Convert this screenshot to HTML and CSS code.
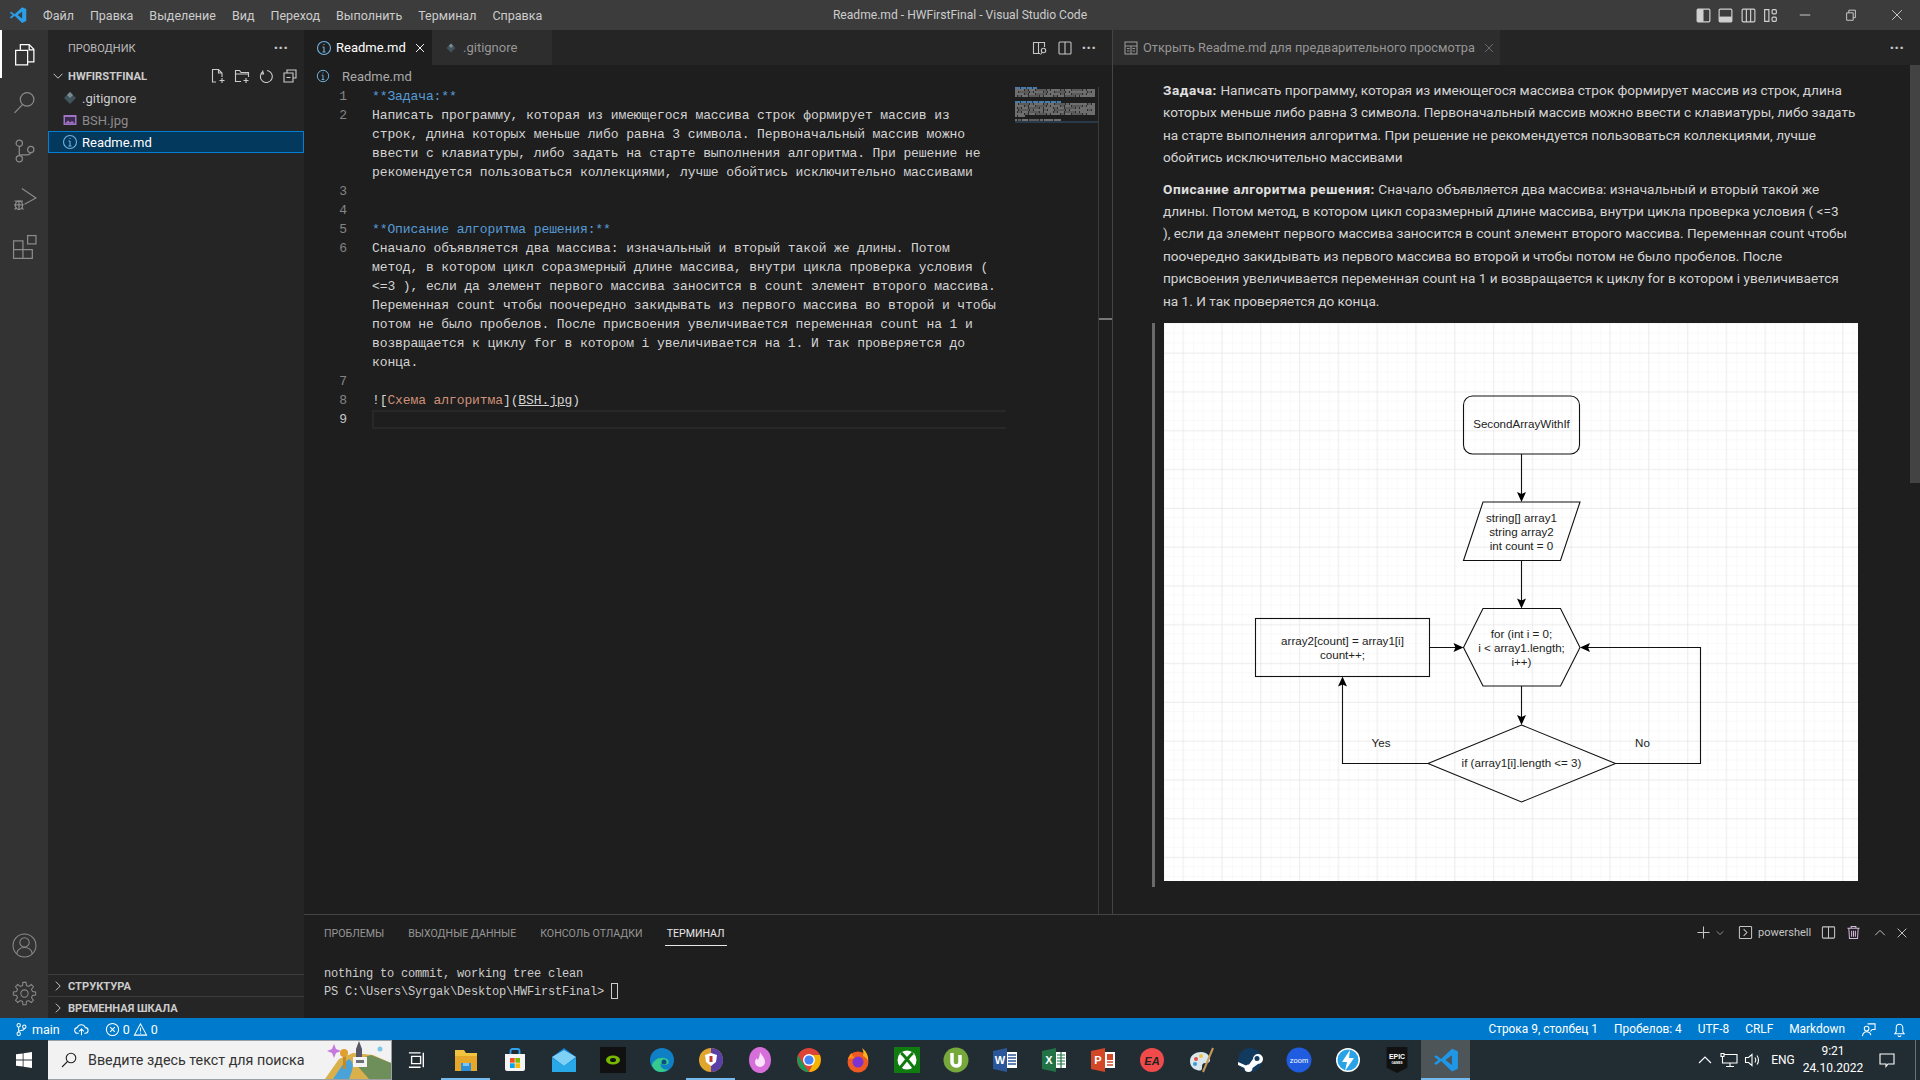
FILE: index.html
```html
<!DOCTYPE html>
<html lang="ru">
<head>
<meta charset="utf-8">
<title>Readme.md - HWFirstFinal - Visual Studio Code</title>
<link rel="stylesheet" href="styles.css">
</head>
<body>
<header class="titlebar">
  <svg class="vsc-logo" viewBox="0 0 24 24"><path fill="#2a9fe8" d="M17.5 1.5 23 4v16l-5.500 2.500L7.500 13l-4.500 3.500L1 15l4-3-4-3 2-1.500L7.500 11zM17.500 7.500 11.500 12l6 4.500z"/></svg>
  <nav class="menu"><span>Файл</span><span>Правка</span><span>Выделение</span><span>Вид</span><span>Переход</span><span>Выполнить</span><span>Терминал</span><span>Справка</span></nav>
  <div class="wintitle">Readme.md - HWFirstFinal - Visual Studio Code</div>
  <div class="layout-btns">
    <svg class="ic" viewBox="0 0 16 16"><rect x="2" y="2" width="12" height="12" rx="1"/><path class="solid" d="M2 2h6v12H2z"/></svg>
    <svg class="ic" viewBox="0 0 16 16"><rect x="2" y="2" width="12" height="12" rx="1"/><path class="solid" d="M2 9h12v5H2z"/></svg>
    <svg class="ic" viewBox="0 0 16 16"><rect x="2" y="2" width="12" height="12" rx="1"/><path d="M10 2v12M6 2v12"/></svg>
    <svg class="ic" viewBox="0 0 16 16"><path d="M2.500 2.500h4v11h-4z"/><rect x="9.500" y="2.500" width="4" height="4" rx="1"/><rect x="9.500" y="9.500" width="4" height="4" rx="1"/></svg>
  </div>
  <div class="win-btns">
    <span class="win-btn"><svg class="ic" viewBox="0 0 16 16"><path d="M2 8h12"/></svg></span>
    <span class="win-btn"><svg class="ic" viewBox="0 0 16 16"><path d="M3 5.500h7.500V14H3zM5.500 5.500V2.500H13V11h-2.500"/></svg></span>
    <span class="win-btn"><svg class="ic" viewBox="0 0 16 16"><path d="M2.500 2.500l11 11M13.500 2.500l-11 11"/></svg></span>
  </div>
</header>

<div class="main">
  <aside class="activity">
    <div class="act active"><svg class="ic" viewBox="0 0 24 24"><path d="M8 8V2.500h8.500L21 7v12h-6M16.500 2.500V7.500H21"/><path d="M3.500 8H15v14H3.500z"/></svg></div>
    <div class="act"><svg class="ic" viewBox="0 0 24 24"><circle cx="14.500" cy="9" r="6.500"/><path d="M10 14l-7.500 8"/></svg></div>
    <div class="act"><svg class="ic" viewBox="0 0 24 24"><circle cx="7" cy="5" r="3"/><circle cx="7" cy="20" r="3"/><circle cx="18" cy="11" r="3"/><path d="M7 8v9M18 14c0 4-11 1-11 3"/></svg></div>
    <div class="act"><svg class="ic" viewBox="0 0 24 24"><path d="M9.500 2.500 23 11.500l-11 6"/><path d="M2.500 14.500h8M2.500 22.500l2-2M11 22.500l-2-2M2 18h9M6.700 14.500V23"/><ellipse cx="6.700" cy="18.500" rx="3.500" ry="4"/></svg></div>
    <div class="act"><svg class="ic" viewBox="0 0 24 24"><rect x="15" y="1.500" width="8" height="8"/><path d="M1.500 6.500h9v17h-9zM1.500 15h18v8.500h-9"/></svg></div>
    <div class="act-fill"></div>
    <div class="act"><svg class="ic big" viewBox="0 0 24 24"><circle cx="12" cy="12" r="11"/><circle cx="12" cy="9" r="4.500"/><path d="M4.500 20c1-5 4-6 7.500-6s6.500 1 7.500 6"/></svg></div>
    <div class="act gear"><svg class="ic big" viewBox="-12 -12 24 24"><defs><path id="tooth" d="M-3-7.200-1.900-7.600-1.500-10.700H1.500L1.900-7.600 3-7.200"/></defs><use href="#tooth"/><use href="#tooth" transform="rotate(45)"/><use href="#tooth" transform="rotate(90)"/><use href="#tooth" transform="rotate(135)"/><use href="#tooth" transform="rotate(180)"/><use href="#tooth" transform="rotate(225)"/><use href="#tooth" transform="rotate(270)"/><use href="#tooth" transform="rotate(315)"/><circle r="3.500"/></svg></div>
  </aside>

  <aside class="sidebar">
    <div class="side-head"><span>ПРОВОДНИК</span><span class="dots">···</span></div>
    <div class="tree-head">
      <svg class="ic chev" viewBox="0 0 16 16"><path d="M3 5.500l5 5 5-5"/></svg>
      <b>HWFIRSTFINAL</b>
      <span class="tree-actions">
        <svg class="ic" viewBox="0 0 16 16"><path d="M6 14H2.500V1.500h6L12 5v4M8.500 1.500V5H12M12 10v5M9.500 12.500h5"/></svg>
        <svg class="ic" viewBox="0 0 16 16"><path d="M7 13.500H1.500v-11h4l1.500 2h7.500V9M1.500 6h13M12 10v5M9.500 12.500h5"/></svg>
        <svg class="ic" viewBox="0 0 16 16"><path d="M4.500 2.500l1 3.500h-3M5 3.500a6 6 0 1 0 4-1"/></svg>
        <svg class="ic" viewBox="0 0 16 16"><path d="M5 4.500V2h9v8h-3M2 5h9v9H2zM4.500 9.500h4"/></svg>
      </span>
    </div>
    <div class="file"><svg class="fi" viewBox="0 0 16 16"><path fill="#41535b" d="M8 2l6 6-6 6-6-6z"/><path fill="#7a8b93" d="M8 2 5 5l3 3 3-3z"/></svg><span>.gitignore</span></div>
    <div class="file dim"><svg class="fi" viewBox="0 0 16 16"><rect x="1.500" y="3" width="13" height="10" fill="#a074c4"/><rect x="3" y="5" width="10" height="6.500" fill="#3d2c52"/><path fill="#a074c4" d="M3 11.500l3-3 2 2 2-1.500 3 2.500z"/></svg><span>BSH.jpg</span></div>
    <div class="file selected"><svg class="ic fi info" viewBox="0 0 16 16"><circle cx="8" cy="8" r="6.500"/><path d="M8 7v5M6.500 12h3M6.500 7H8M8 4v1"/></svg><span>Readme.md</span></div>
    <div class="side-fill"></div>
    <div class="pane-head"><svg class="ic chev" viewBox="0 0 16 16"><path d="M5.500 3l5 5-5 5"/></svg><b>СТРУКТУРА</b></div>
    <div class="pane-head"><svg class="ic chev" viewBox="0 0 16 16"><path d="M5.500 3l5 5-5 5"/></svg><b>ВРЕМЕННАЯ ШКАЛА</b></div>
  </aside>

  <div class="workspace">
    <div class="editors">
      <section class="group">
        <div class="tabs">
          <div class="tab active"><svg class="ic fi info" viewBox="0 0 16 16"><circle cx="8" cy="8" r="6.500"/><path d="M8 7v5M6.500 12h3M6.500 7H8M8 4v1"/></svg><span class="tab-name">Readme.md</span><svg class="ic tab-x" viewBox="0 0 16 16"><path d="M3.500 3.500l9 9M12.500 3.500l-9 9"/></svg></div>
          <div class="tab off"><svg class="fi small" viewBox="0 0 16 16"><path fill="#41535b" d="M8 2l6 6-6 6-6-6z"/><path fill="#7a8b93" d="M8 2 5 5l3 3 3-3z"/></svg><span class="tab-name">.gitignore</span></div>
          <div class="tab-actions">
            <svg class="ic" viewBox="0 0 16 16"><path d="M8 13.500H1.500v-11h11V7M6.500 2.500v11"/><circle cx="11.500" cy="10.500" r="2.200"/><path d="M10 12.500l-1.500 2"/></svg>
            <svg class="ic" viewBox="0 0 16 16"><rect x="2" y="2" width="12" height="12" rx="1"/><path d="M8 2v12"/></svg>
            <span class="dots">···</span>
          </div>
        </div>
        <div class="crumbs"><svg class="ic fi info" viewBox="0 0 16 16"><circle cx="8" cy="8" r="6.500"/><path d="M8 7v5M6.500 12h3M6.500 7H8M8 4v1"/></svg><span>Readme.md</span></div>
        <div class="code-area">
          <div class="code">
            <div class="row"><span class="ln">1</span><span class="tx head">**Задача:**</span></div>
            <div class="row"><span class="ln">2</span><span class="tx">Написать программу, которая из имеющегося массива строк формирует массив из</span></div>
            <div class="row"><span class="ln"></span><span class="tx">строк, длина которых меньше либо равна 3 символа. Первоначальный массив можно</span></div>
            <div class="row"><span class="ln"></span><span class="tx">ввести с клавиатуры, либо задать на старте выполнения алгоритма. При решение не</span></div>
            <div class="row"><span class="ln"></span><span class="tx">рекомендуется пользоваться коллекциями, лучше обойтись исключительно массивами</span></div>
            <div class="row"><span class="ln">3</span><span class="tx"></span></div>
            <div class="row"><span class="ln">4</span><span class="tx"></span></div>
            <div class="row"><span class="ln">5</span><span class="tx head">**Описание алгоритма решения:**</span></div>
            <div class="row"><span class="ln">6</span><span class="tx">Сначало объявляется два массива: изначальный и вторый такой же длины. Потом</span></div>
            <div class="row"><span class="ln"></span><span class="tx">метод, в котором цикл соразмерный длине массива, внутри цикла проверка условия (</span></div>
            <div class="row"><span class="ln"></span><span class="tx">&lt;=3 ), если да элемент первого массива заносится в count элемент второго массива.</span></div>
            <div class="row"><span class="ln"></span><span class="tx">Переменная count чтобы поочередно закидывать из первого массива во второй и чтобы</span></div>
            <div class="row"><span class="ln"></span><span class="tx">потом не было пробелов. После присвоения увеличивается переменная count на 1 и</span></div>
            <div class="row"><span class="ln"></span><span class="tx">возвращается к циклу for в котором i увеличивается на 1. И так проверяется до</span></div>
            <div class="row"><span class="ln"></span><span class="tx">конца.</span></div>
            <div class="row"><span class="ln">7</span><span class="tx"></span></div>
            <div class="row"><span class="ln">8</span><span class="tx">![<span class="lk">Схема алгоритма</span>](<u>BSH.jpg</u>)</span></div>
            <div class="row current"><span class="ln">9</span><span class="tx"></span></div>
          </div>
          <div class="minimap">
            <div class="mini-line short blue"></div>
            <div class="mini-line"></div><div class="mini-line"></div><div class="mini-line"></div><div class="mini-line"></div>
            <div class="mini-line blank"></div><div class="mini-line blank"></div>
            <div class="mini-line mid blue"></div>
            <div class="mini-line"></div><div class="mini-line"></div><div class="mini-line"></div><div class="mini-line"></div><div class="mini-line"></div><div class="mini-line"></div>
            <div class="mini-line tiny"></div>
            <div class="mini-line blank"></div>
            <div class="mini-line mid"></div>
            <div class="mini-cur"></div>
          </div>
          <div class="ruler"><div class="ruler-mark"></div></div>
        </div>
      </section>

      <section class="preview">
        <div class="tabs">
          <div class="tab off wide"><svg class="ic fi" viewBox="0 0 16 16"><rect x="2" y="2" width="12" height="12"/><path d="M2 6h12M8 6v8M4 8.500h2.500M4 11h2.500M9.500 8.500H12M9.500 11H12"/></svg><span class="tab-name">Открыть Readme.md для предварительного просмотра</span><svg class="ic tab-x" viewBox="0 0 16 16"><path d="M3.500 3.500l9 9M12.500 3.500l-9 9"/></svg></div>
          <div class="tab-actions"><span class="dots">···</span></div>
        </div>
        <div class="preview-body">
          <article class="doc">
            <p><b>Задача:</b> Написать программу, которая из имеющегося массива строк формирует массив из строк, длина<br>которых меньше либо равна 3 символа. Первоначальный массив можно ввести с клавиатуры, либо задать<br>на старте выполнения алгоритма. При решение не рекомендуется пользоваться коллекциями, лучше<br>обойтись исключительно массивами</p>
            <p><b>Описание алгоритма решения:</b> Сначало объявляется два массива: изначальный и вторый такой же<br>длины. Потом метод, в котором цикл соразмерный длине массива, внутри цикла проверка условия ( &lt;=3<br>), если да элемент первого массива заносится в count элемент второго массива. Переменная count чтобы<br>поочередно закидывать из первого массива во второй и чтобы потом не было пробелов. После<br>присвоения увеличивается переменная count на 1 и возвращается к циклу for в котором i увеличивается<br>на 1. И так проверяется до конца.</p>
            <blockquote>
              <svg class="diagram" viewBox="0 0 694 558">
                <defs>
                  <pattern id="minor" width="9.700" height="9.700" patternUnits="userSpaceOnUse"><path d="M9.700 0H0V9.700" fill="none" stroke="#f4f4f4"/></pattern>
                  <pattern id="major" x="18.500" y="-9" width="38.800" height="38.800" patternUnits="userSpaceOnUse"><path d="M38.800 0H0V38.800" fill="none" stroke="#e2e2e2"/></pattern>
                  <path id="arrow" d="M0 0-4.500-10 0-8 4.500-10z" fill="#000"/>
                </defs>
                <rect width="694" height="558" fill="#fff"/>
                <rect width="694" height="558" fill="url(#minor)"/>
                <rect width="694" height="558" fill="url(#major)"/>
                <g class="shapes">
                  <rect x="299.500" y="73" width="116" height="58" rx="9"/>
                  <path d="M319 179H416L396.500 237.500H299.500z"/>
                  <path d="M319 285.500H396.500L416 324.500 396.500 363H319L299.500 324.500z"/>
                  <rect x="91.500" y="295.500" width="174" height="58"/>
                  <path d="M357.500 402 451.500 440.500 357.500 479 264 440.500z"/>
                  <path d="M357.500 131V172M357.500 237.500V278M265.500 324.500H292M357.500 363V395M264 440.500H178.500V360M451.500 440.500H536.500V324.500H423"/>
                </g>
                <use href="#arrow" transform="translate(357.500 179)"/>
                <use href="#arrow" transform="translate(357.500 285.500)"/>
                <use href="#arrow" transform="translate(299.500 324.500) rotate(-90)"/>
                <use href="#arrow" transform="translate(357.500 402)"/>
                <use href="#arrow" transform="translate(178.500 353.500) rotate(180)"/>
                <use href="#arrow" transform="translate(416 324.500) rotate(90)"/>
                <g class="dtext">
                  <text x="357.500" y="105">SecondArrayWithIf</text>
                  <text x="357.500" y="198.500">string[] array1</text>
                  <text x="357.500" y="212.500">string array2</text>
                  <text x="357.500" y="226.500">int count = 0</text>
                  <text x="357.500" y="314.500">for (int i = 0;</text>
                  <text x="357.500" y="328.500">i &lt; array1.length;</text>
                  <text x="357.500" y="342.500">i++)</text>
                  <text x="178.500" y="322">array2[count] = array1[i]</text>
                  <text x="178.500" y="336">count++;</text>
                  <text x="357.500" y="444">if (array1[i].length &lt;= 3)</text>
                  <text x="217" y="424">Yes</text>
                  <text x="478.500" y="424">No</text>
                </g>
              </svg>
            </blockquote>
          </article>
          <div class="vscroll"><div class="vthumb"></div></div>
        </div>
      </section>
    </div>

    <section class="panel">
      <div class="panel-tabs">
        <span>ПРОБЛЕМЫ</span><span>ВЫХОДНЫЕ ДАННЫЕ</span><span>КОНСОЛЬ ОТЛАДКИ</span><span class="on">ТЕРМИНАЛ</span>
        <div class="panel-actions">
          <svg class="ic plus" viewBox="0 0 16 16"><path d="M8 1.500v13M1.500 8h13"/></svg>
          <svg class="ic caret" viewBox="0 0 16 16"><path d="M3 5.500l5 5 5-5"/></svg>
          <svg class="ic term" viewBox="0 0 16 16"><rect x="1.500" y="1.500" width="13" height="13" rx="1"/><path d="M6 4.500 9.500 8 6 11.500"/></svg>
          <span class="pw">powershell</span>
          <svg class="ic split" viewBox="0 0 16 16"><rect x="1.500" y="2" width="13" height="12" rx="1"/><path d="M8 2v12"/></svg>
          <svg class="ic trash" viewBox="0 0 16 16"><path d="M1.500 3.500h13M5.500 3.500v-2h5v2M3 3.500l.7 11h8.600l.7-11M6 6v6.500M8 6v6.500M10 6v6.500"/></svg>
          <svg class="ic up" viewBox="0 0 16 16"><path d="M2.500 10.500 8 5l5.500 5.500"/></svg>
          <svg class="ic cl" viewBox="0 0 16 16"><path d="M3 3l10 10M13 3 3 13"/></svg>
        </div>
      </div>
      <div class="terminal">
        <div class="term-line">nothing to commit, working tree clean</div>
        <div class="term-line">PS C:\Users\Syrgak\Desktop\HWFirstFinal&gt; <span class="cursor"></span></div>
      </div>
    </section>
  </div>
</div>

<footer class="status">
  <span class="st branch"><svg class="ic" viewBox="0 0 16 16"><circle cx="5" cy="3.500" r="1.800"/><circle cx="5" cy="12.500" r="1.800"/><circle cx="11" cy="5" r="1.800"/><path d="M5 5.300v5.400M11 6.800c0 3-6 1.500-6 3.500"/></svg>main</span>
  <span class="st"><svg class="ic" viewBox="0 0 16 16"><path d="M5 12H4a3 3 0 0 1-.5-6A4.500 4.500 0 0 1 12 6a3 3 0 0 1 0 6h-1M8 14V8M5.500 10 8 7.500l2.500 2.500"/></svg></span>
  <span class="st prob"><svg class="ic" viewBox="0 0 16 16"><circle cx="8" cy="8" r="6.500"/><path d="M5.500 5.500l5 5M10.500 5.500l-5 5"/></svg>0<svg class="ic" viewBox="0 0 16 16"><path d="M8 2 14.500 14h-13zM8 6v4M8 11.500v1"/></svg>0</span>
  <span class="st-right">
    <span>Строка 9, столбец 1</span><span>Пробелов: 4</span><span>UTF-8</span><span>CRLF</span><span>Markdown</span>
    <svg class="ic" viewBox="0 0 16 16"><circle cx="6" cy="7" r="2.500"/><path d="M1.500 15c.5-3 2-4.500 4.500-4.500S10 12 10.500 14M7 2h8v6h-3l-2 2"/></svg>
    <svg class="ic bell" viewBox="0 0 16 16"><path d="M3 12.500h10l-1.500-2V6a3.500 3.500 0 0 0-7 0v4.500zM6.500 14a1.500 1.500 0 0 0 3 0"/></svg>
  </span>
</footer>

<footer class="taskbar">
  <div class="start"><svg viewBox="0 0 16 16"><path fill="#fff" d="M0 2.300 6.700 1.400V7.600H0zM7.500 1.300 16 0V7.600H7.500zM0 8.400H6.700V14.600L0 13.700zM7.500 8.400H16V16L7.500 14.700z"/></svg></div>
  <div class="search">
    <svg class="mag" viewBox="0 0 16 16"><circle cx="10" cy="6" r="4.800"/><path d="M6.500 9.500 1 15"/></svg>
    <span class="search-text">Введите здесь текст для поиска</span>
    <svg class="scene" viewBox="0 0 74 38"><path fill="#d9b04a" d="M8 38 22 18l14-6 20 2 18 8v16z"/><path fill="#6f8f5a" d="M36 20l18-6 20 8v16H52z"/><path fill="#4aa3d8" d="M16 38c6-8 8-14 16-20 6 4 4 10 0 20z"/><rect x="36" y="16" width="14" height="10" fill="#f4f4f4"/><rect x="39" y="19" width="8" height="3" fill="#66717a"/><path fill="#556" d="M42 0l3 8v8h-6V8z"/><path fill="#c678dd" d="M17 3l2 5 5 2-5 2-2 5-2-5-5-2 5-2z"/><circle cx="63" cy="8" r="2.500" fill="#7cc7e8"/><rect x="26" y="14" width="3" height="14" fill="#c28a2a"/><circle cx="27" cy="12" r="4" fill="#e0a030"/></svg>
  </div>
  <div class="tb"><svg class="tv" viewBox="0 0 20 20"><path d="M1 2h13M1 18h13M4 6h10v8H4zM17 2v16" fill="none" stroke="#fff" stroke-width="1.500"/></svg></div>
  <div class="tb run"><svg viewBox="0 0 26 26"><path fill="#f2c33f" d="M2 3h9l2 3h11v18H2z"/><path fill="#e5a82a" d="M2 9h22v15H2z"/><path fill="#2d8fd5" d="M8 16h10v8H8z"/><path fill="#7cc8f2" d="M10 16h6v3h-6z"/></svg></div>
  <div class="tb"><svg viewBox="0 0 26 26"><path d="M8.500 7V4a2 2 0 0 1 2-2h5a2 2 0 0 1 2 2v3" fill="none" stroke="#2ea3f2" stroke-width="1.800"/><path fill="#f5f5f5" d="M3 7h20v15a2 2 0 0 1-2 2H5a2 2 0 0 1-2-2z"/><path fill="#f25022" d="M8 11h4.700v4.700H8z"/><path fill="#7fba00" d="M13.300 11H18v4.700h-4.700z"/><path fill="#00a4ef" d="M8 16.300h4.700V21H8z"/><path fill="#ffb900" d="M13.300 16.300H18V21h-4.700z"/></svg></div>
  <div class="tb"><svg viewBox="0 0 26 26"><path fill="#0c7cd5" d="M13 1 25 10v15H1V10z"/><path fill="#7fd0f5" d="M1 10l12 9 12-9-12-7z"/><path fill="#29a8e8" d="M1 25V11l12 8 12-8v14z"/></svg></div>
  <div class="tb"><svg viewBox="0 0 26 26"><rect width="26" height="26" fill="#111"/><ellipse cx="13" cy="13" rx="7" ry="4.500" fill="#76b900"/><ellipse cx="13" cy="13" rx="3" ry="2" fill="#111"/></svg></div>
  <div class="tb"><svg viewBox="0 0 26 26"><circle cx="13" cy="13" r="12" fill="#0f7fc6"/><path fill="#35c98e" d="M3 18c2-6 9-9 15-6 3 2 2 6-2 6-3 0-4-1-4-2-2 4 3 8 8 6-2 2-5 3-8 3-5 0-8-3-9-7z"/><circle cx="15" cy="15" r="2.500" fill="#0b4f8a"/></svg></div>
  <div class="tb run"><svg viewBox="0 0 26 26"><circle cx="13" cy="13" r="12" fill="#e0a52c"/><path fill="#5b3fa8" d="M13 1a12 12 0 0 1 0 24z"/><path fill="#fff" d="M13 6l6 2-1 7-5 4-5-4-1-7z"/><path d="M13 9v6" stroke="#c0392b" stroke-width="3"/></svg></div>
  <div class="tb"><svg viewBox="0 0 26 26"><ellipse cx="13" cy="13" rx="11" ry="13" fill="#d66fd9"/><path fill="#fbe3fb" d="M13 5c1 3 5 5 5 10a5 5 0 0 1-10 0c0-2 1-3 2-4 0 1 1 2 1 2 1-2 2-5 2-8z"/></svg></div>
  <div class="tb"><svg viewBox="0 0 26 26"><circle cx="13" cy="13" r="12" fill="#db4437"/><path fill="#0f9d58" d="M1.800 8 8 18.500 13 25C5 25 0 17 1.800 8z"/><path fill="#f4b400" d="M13 25c8 0 14-8 11-17H13l5 7z"/><path fill="#fff" d="M13 7a6 6 0 1 0 0 12 6 6 0 0 0 0-12z"/><circle cx="13" cy="13" r="4.600" fill="#4285f4"/></svg></div>
  <div class="tb"><svg viewBox="0 0 26 26"><circle cx="13" cy="15" r="10.500" fill="#ee5a24"/><path fill="#ffb21a" d="M17 1c4 3 7 8 6 13-1-3-3-4-5-5 1-3 0-6-1-8z"/><circle cx="13" cy="15" r="5.500" fill="#7b33d1"/><path fill="#ff8b16" d="M3 12c1-3 2-5 4-6 0 2 1 4 3 5-3 0-5 1-7 1z"/></svg></div>
  <div class="tb"><svg viewBox="0 0 26 26"><rect width="26" height="26" fill="#107c10"/><circle cx="13" cy="13" r="9.500" fill="#fff"/><path d="M7 6c3 2 9 10 13 15M19 6C16 8 10 16 6 21" stroke="#107c10" stroke-width="3" fill="none"/></svg></div>
  <div class="tb"><svg viewBox="0 0 26 26"><circle cx="13" cy="13" r="12.500" fill="#76a83c"/><path d="M9 6v9a4 4 0 0 0 4 4c3 0 4-2 4-4V8" fill="none" stroke="#fff" stroke-width="3.500"/></svg></div>
  <div class="tb"><svg viewBox="0 0 26 26"><path fill="#2b579a" d="M1 4 15 1v24L1 22z"/><rect x="15" y="5" width="10" height="16" fill="#fff"/><path d="M16 8h8M16 11h8M16 14h8M16 17h8" stroke="#2b579a" stroke-width="1.300"/><text class="ltr" x="8" y="17">W</text></svg></div>
  <div class="tb"><svg viewBox="0 0 26 26"><path fill="#217346" d="M1 4 15 1v24L1 22z"/><rect x="15" y="5" width="10" height="16" fill="#fff"/><path d="M16 8h8M16 11h8M16 14h8M16 17h8M20 5v16" stroke="#217346" stroke-width="1.200"/><text class="ltr" x="8" y="17">X</text></svg></div>
  <div class="tb"><svg viewBox="0 0 26 26"><path fill="#d24726" d="M1 4 15 1v24L1 22z"/><rect x="15" y="5" width="10" height="16" fill="#fff"/><path d="M17 15h6M17 18h6" stroke="#d24726" stroke-width="1.300"/><rect x="17" y="7" width="6" height="6" fill="#d24726"/><text class="ltr" x="8" y="17">P</text></svg></div>
  <div class="tb"><svg viewBox="0 0 26 26"><circle cx="13" cy="13" r="12" fill="#f04a4a"/><text class="ea" x="13" y="17.500">EA</text></svg></div>
  <div class="tb"><svg viewBox="0 0 26 26"><path fill="#d8e6ee" d="M2 14c0-6 6-9 11-9 6 0 9 4 9 8 0 3-3 3-5 3-3 0-3 3-3 5 0 3-3 3-5 2-4-1-7-4-7-9z"/><circle cx="8" cy="12" r="2" fill="#e25041"/><circle cx="13" cy="9" r="2" fill="#f5c33b"/><circle cx="7" cy="17" r="2" fill="#3a9bdc"/><path d="M25 1 15 25" stroke="#c99a5a" stroke-width="2"/></svg></div>
  <div class="tb"><svg viewBox="0 0 26 26"><circle cx="13" cy="13" r="12" fill="#123a5e"/><path fill="#fff" d="M1 15l8 3.500a4 4 0 0 1 3-1l4-5.500a5 5 0 1 1 5 5l-5.500 4a4 4 0 0 1-8 0L1 18z"/><circle cx="20" cy="11.500" r="2.500" fill="#123a5e"/></svg></div>
  <div class="tb"><svg viewBox="0 0 26 26"><circle cx="13" cy="13" r="12.500" fill="#1f5ce0"/><text class="zm" x="13" y="15.500">zoom</text></svg></div>
  <div class="tb"><svg viewBox="0 0 26 26"><circle cx="13" cy="13" r="12" fill="#fff"/><circle cx="13" cy="13" r="10.500" fill="#2aa3e6"/><path fill="#fff" d="M15 3 7 15h5l-2 9 9-13h-5z"/></svg></div>
  <div class="tb"><svg viewBox="0 0 26 30"><path fill="#111" d="M1 0h24v24l-12 6-12-6z"/><text class="ep" x="13" y="14">EPIC</text><text class="ep2" x="13" y="20">GAMES</text></svg></div>
  <div class="tb code-btn"><svg viewBox="0 0 24 24"><path fill="#1f96e6" d="M17.500 1.500 23 4v16l-5.500 2.500L7.500 13l-4.500 3.500L1 15l4-3-4-3 2-1.500L7.500 11zM17.500 7.500 11.500 12l6 4.500z"/></svg></div>
  <div class="tray">
    <svg class="ic tr" viewBox="0 0 16 16"><path d="M2 11 8 5l6 6"/></svg>
    <svg class="ic tr" viewBox="0 0 18 16"><path d="M1 1.500h3v3H1zM4 2.500H17V11H4M2.500 4.500V11H4M10 11v3.500M6 14.500h8"/></svg>
    <svg class="ic tr" viewBox="0 0 18 16"><path d="M1.500 5.500h3L8 2.500v11l-3.500-3h-3zM11 5.500c1 1.500 1 3.500 0 5M13 3.500c2 2.500 2 6.500 0 9"/></svg>
    <span class="eng">ENG</span>
    <span class="clock"><span>9:21</span><span>24.10.2022</span></span>
    <span class="notif"><svg class="ic" viewBox="0 0 16 16"><path d="M1 2h14v10H9l-2 2.500V12H1z"/></svg></span>
    <span class="desk"></span>
  </div>
</footer>
</body>
</html>
```
FILE: styles.css
```css
* { box-sizing: border-box; }
html, body { margin: 0; height: 100%; }
body {
  width: 1920px; height: 1080px; overflow: hidden;
  display: flex; flex-direction: column;
  font-family: "Roboto", "Noto Sans", sans-serif;
  font-size: 13px; color: #ccc; background: #1e1e1e;
}
svg { display: block; flex: none; }
.ic { fill: none; stroke: currentColor; stroke-width: 1.1; }
.ic .solid { fill: currentColor; stroke: none; }

/* title bar */
.titlebar { height: 30px; flex: none; background: #3c3c3c; display: flex; align-items: center; position: relative; color: #ccc; }
.vsc-logo { width: 18px; height: 18px; margin: 0 0 0 9px; }
.menu { display: flex; margin-left: 16px; gap: 16px; font-size: 12.5px; }
.wintitle { position: absolute; left: 0; right: 0; text-align: center; font-size: 12.1px; pointer-events: none; }
.layout-btns { margin-left: auto; display: flex; gap: 5.5px; color: #d0d0d0; }
.layout-btns svg { width: 17px; height: 17px; }
.win-btns { display: flex; margin-left: 3px; }
.win-btn { width: 46px; height: 30px; display: flex; align-items: center; justify-content: center; }
.win-btn svg { width: 14px; height: 14px; }

/* main */
.main { flex: 1; min-height: 0; display: flex; }
.activity { width: 48px; flex: none; background: #333; display: flex; flex-direction: column; color: #8a8a8a; }
.act { height: 48px; display: flex; align-items: center; justify-content: center; border-left: 2px solid transparent; padding-right: 2px; flex: none; }
.act svg { width: 25px; height: 25px; stroke-width: 1.2; }
.act.active { border-left-color: #fff; color: #fff; }
.act-fill { flex: 1; }
.act svg.big { width: 25px; height: 25px; stroke-width: 1; }
.gear { margin-bottom: 1px; }

.sidebar { width: 256px; flex: none; background: #252526; display: flex; flex-direction: column; }
.side-head { height: 35px; flex: none; display: flex; align-items: center; justify-content: space-between; padding: 1px 16px 0 20px; font-size: 11px; color: #bbb; }
.dots { font-size: 16px; font-weight: 700; letter-spacing: 0; color: #c5c5c5; line-height: 1; }
.tree-head { height: 22px; flex: none; display: flex; align-items: center; padding-left: 3px; font-size: 11.2px; }
.tree-head b, .pane-head b { font-weight: 700; color: #ccc; }
.chev { width: 14px; height: 14px; margin-right: 3px; margin-left: 0; }
.tree-actions { margin-left: auto; display: flex; gap: 8px; padding-right: 6px; }
.tree-actions svg { width: 16px; height: 16px; }
.file { height: 22px; flex: none; display: flex; align-items: center; padding-left: 14px; font-size: 13px; border: 1px solid transparent; }
.file.dim { color: #8c8c8c; }
.file.selected { background: #04395e; border-color: #007fd4; color: #fff; }
.fi { width: 16px; height: 16px; margin-right: 4px; margin-left: -1px; }
.fi.info { color: #6fb3e0; }
.side-fill { flex: 1; }
.pane-head { height: 22px; flex: none; display: flex; align-items: center; border-top: 1px solid #3c3c3c; padding: 1px 0 0 3px; font-size: 11.1px; }

/* workspace */
.workspace { flex: 1; min-width: 0; display: flex; flex-direction: column; background: #1e1e1e; }
.editors { flex: 1; min-height: 0; display: flex; }
.group { width: 809px; flex: none; border-right: 1px solid #444; display: flex; flex-direction: column; }
.preview { flex: 1; min-width: 0; display: flex; flex-direction: column; }
.tabs { height: 35px; flex: none; background: #252526; display: flex; align-items: stretch; }
.tab { display: flex; align-items: center; font-size: 13px; white-space: nowrap; }
.tab.active { width: 128px; padding-left: 13px; background: #1e1e1e; color: #fff; }
.tab.off { width: 120px; padding-left: 14px; background: #2d2d2d; color: #969696; }
.tab.off.wide { width: 387px; padding-left: 11px; font-size: 12.75px; }
.fi.small { width: 12px; height: 12px; margin-right: 6px; }
.tab-x { width: 14px; height: 14px; margin-left: 7px; }
.tab.off .tab-x { color: #6e6e6e; }
.tab-actions { margin-left: auto; display: flex; align-items: center; gap: 9px; padding-right: 16px; color: #c5c5c5; }
.tab-actions svg { width: 16px; height: 16px; }
.crumbs { height: 22px; flex: none; display: flex; align-items: center; padding-left: 11px; font-size: 13px; color: #a9a9a9; }
.crumbs .fi { width: 14px; height: 14px; margin-right: 12px; margin-left: 1px; }

.code-area { flex: 1; min-height: 0; display: flex; }
.code { width: 711px; flex: none; font-family: "Liberation Mono", monospace; font-size: 13px; letter-spacing: -.1px; line-height: 19px; color: #d4d4d4; }
.row { height: 19px; display: flex; white-space: pre; }
.ln { width: 68px; flex: none; text-align: right; padding-right: 25px; color: #858585; }
.tx { flex: 1; }
.row.current .ln { color: #c6c6c6; }
.row.current .tx { border: 2px solid #282828; border-right: 0; margin-right: 9px; }
.head { color: #569cd6; }
.lk { color: #ce9178; }
.minimap { width: 83px; flex: none; display: flex; flex-direction: column; }
.mini-line { height: 2px; flex: none; width: 80px; background: repeating-linear-gradient(90deg, #6e6e6e 0 9px, #2c2c2c 9px 10px, #5c5c5c 10px 13px, #2c2c2c 13px 14px, #707070 14px 20px, #2c2c2c 20px 21px, #5a5a5a 21px 31px, #2c2c2c 31px 32px, #686868 32px 35px, #2c2c2c 35px 36px); }
.mini-line:nth-child(odd) { background-position-x: -7px; }
.mini-line:nth-child(3n) { background-position-x: -17px; }
.mini-line.short { width: 22px; }
.mini-line.mid { width: 46px; }
.mini-line.tiny { width: 10px; }
.mini-line.blue { background: repeating-linear-gradient(90deg, #4a7ba6 0 5px, #25384a 5px 6px); }
.mini-line.blank { background: none; }
.mini-cur { height: 2px; flex: none; background: #2a3a4a; }
.ruler { width: 14px; flex: none; border-left: 1px solid #3a3a3a; }
.ruler-mark { height: 2px; margin-top: 231px; background: #777; }

/* preview */
.preview-body { flex: 1; min-height: 0; display: flex; }
.doc { flex: 1; min-width: 0; padding: 14px 0 0 50px; font-size: 13.6px; line-height: 22.4px; color: #d4d4d4; white-space: nowrap; }
.doc p { margin: 0 0 9px; }
.doc b { font-weight: 700; color: #e0e0e0; letter-spacing: .55px; }
blockquote { margin: 11px 0 0 -11px; padding: 0 0 6px 9px; border-left: 3px solid #6a6a6a; width: 706px; }
.diagram { width: 694px; height: 558px; }
.shapes { fill: none; stroke: #111; stroke-width: 1.1; }
.dtext text { font-family: "Liberation Sans", sans-serif; font-size: 11.6px; fill: #222; text-anchor: middle; }
.vscroll { width: 10px; flex: none; }
.vthumb { height: 418px; background: #434343; }

/* panel */
.panel { height: 104px; flex: none; border-top: 1px solid #444; }
.panel-tabs { height: 35px; display: flex; align-items: flex-start; padding-left: 20px; gap: 24px; font-size: 10.6px; color: #969696; }
.panel-tabs > span { padding-top: 12px; height: 31px; }
.panel-tabs .on { color: #e7e7e7; border-bottom: 1px solid #e7e7e7; margin: 0 -2px; padding: 12px 2px 0; }
.panel-actions { margin-left: auto; display: flex; align-items: center; height: 35px; color: #c5c5c5; }
.panel-actions .plus { width: 15px; height: 15px; margin-right: 4px; }
.panel-actions .caret { width: 10px; height: 10px; margin-right: 13px; }
.panel-actions .term { width: 15px; height: 15px; margin-right: 5px; }
.pw { font-size: 11px; margin-right: 11px; width: 52px; }
.panel-actions .split { width: 15px; height: 15px; margin-right: 10px; }
.panel-actions .trash { width: 15px; height: 15px; margin-right: 12px; color: #d6b8dd; }
.panel-actions .up { width: 14px; height: 14px; margin-right: 8px; }
.panel-actions .cl { width: 14px; height: 14px; margin-right: 11px; }
.terminal { padding: 16px 0 0 20px; font-family: "Liberation Mono", monospace; font-size: 12px; letter-spacing: -.2px; line-height: 17px; color: #ccc; }
.term-line { height: 17px; white-space: pre; }
.cursor { display: inline-block; width: 7px; height: 16px; border: 1px solid #ccc; vertical-align: -4px; }

/* status */
.status { height: 22px; flex: none; background: #007acc; color: #fff; display: flex; align-items: center; font-size: 12.5px; padding-left: 14px; }
.st { display: flex; align-items: center; gap: 3px; }
.st svg { width: 15px; height: 15px; }
.branch { margin-right: 14px; }
.prob { margin-left: 16px; }
.st-right { margin-left: auto; display: flex; align-items: center; gap: 16px; padding-right: 13px; font-size: 11.9px; }
.st-right svg { width: 15px; height: 15px; }

/* taskbar */
.taskbar { height: 40px; flex: none; background: #222d33; display: flex; align-items: stretch; }
.start { width: 48px; flex: none; display: flex; align-items: center; justify-content: center; }
.start svg { width: 16px; height: 16px; }
.search { width: 344px; flex: none; background: #f2f2f2; border: 1px solid #9aa0a4; border-width: 1px 1px 1px 0; display: flex; align-items: center; color: #333; overflow: hidden; }
.mag { width: 16px; height: 16px; margin-left: 13px; fill: none; stroke: #222; stroke-width: 1.1; }
.search-text { margin-left: 11px; font-size: 14.3px; white-space: nowrap; }
.scene { margin-left: auto; width: 74px; height: 38px; }
.tb { width: 49px; flex: none; display: flex; align-items: center; justify-content: center; border-bottom: 2px solid transparent; border-top: 2px solid transparent; }
.tb svg { width: 26px; height: 26px; }
.tb .tv { width: 18px; height: 18px; }
.tb.run { border-bottom-color: #76b9ed; }
.code-btn { background: #4d5559; border-bottom-color: #76b9ed; }
.ltr { font-family: "Liberation Sans", sans-serif; font-weight: 700; font-size: 11px; fill: #fff; text-anchor: middle; }
.ea { font-family: "Liberation Sans", sans-serif; font-weight: 700; font-style: italic; font-size: 11px; fill: #222; text-anchor: middle; }
.zm { font-family: "Liberation Sans", sans-serif; font-size: 7.500px; fill: #fff; text-anchor: middle; }
.ep { font-family: "Liberation Sans", sans-serif; font-weight: 700; font-size: 8px; fill: #fff; text-anchor: middle; }
.ep2 { font-family: "Liberation Sans", sans-serif; font-weight: 700; font-size: 3.500px; fill: #fff; text-anchor: middle; }
.tray { margin-left: auto; display: flex; align-items: center; color: #fff; font-size: 12px; }
.tr { width: 24px; height: 16px; }
.eng { width: 36px; text-align: center; }
.clock { width: 64px; display: flex; flex-direction: column; align-items: center; line-height: 17px; }
.notif { width: 44px; display: flex; justify-content: center; }
.notif svg { width: 16px; height: 16px; }
.desk { width: 5px; height: 40px; margin-left: 6px; border-left: 1px solid #66717a; }
```
